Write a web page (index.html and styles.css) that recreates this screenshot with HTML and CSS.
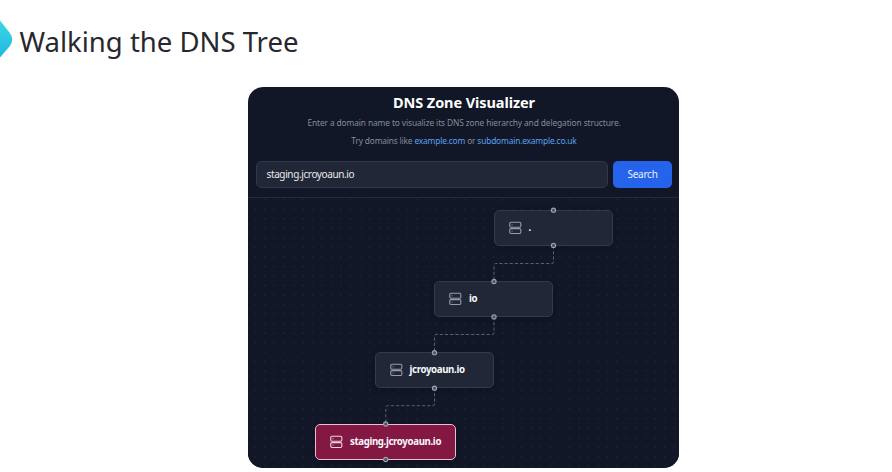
FILE: index.html
```
<!DOCTYPE html>
<html lang="en">
<head>
<meta charset="utf-8">
<title>Walking the DNS Tree</title>
<link rel="stylesheet" href="styles.css">
</head>
<body>
<svg width="0" height="0" class="defs" aria-hidden="true">
  <symbol id="server" viewBox="0 0 24 24"><rect x="3" y="2.2" width="19" height="8.4" rx="2"/><rect x="3" y="13" width="19" height="8.4" rx="2"/><path d="M7 6.4h.01M7 17.2h.01"/></symbol>
</svg>
<header class="slide-header">
  <svg class="mark" width="13" height="42" viewBox="0 0 13 42"><defs><linearGradient id="g" x1="0" y1="0" x2="0" y2="1"><stop offset="0" stop-color="#3dd6e3"/><stop offset="1" stop-color="#20b6e2"/></linearGradient></defs><path d="M0 2.5L9.5 14.5Q15 21.5 9.5 28.5L0 39.5Z" fill="url(#g)"/></svg>
  <h1>Walking the DNS Tree</h1>
</header>
<main class="card">
  <section class="top">
    <h2>DNS Zone Visualizer</h2>
    <p class="intro">Enter a domain name to visualize its DNS zone hierarchy and delegation structure.</p>
    <p class="try">Try domains like <a>example.com</a> or <a>subdomain.example.co.uk</a></p>
    <div class="search">
      <div class="field"><span>staging.jcroyoaun.io</span></div>
      <div class="button"><span>Search</span></div>
    </div>
  </section>
  <section class="canvas">
    <svg class="edges" width="431" height="271" viewBox="0 0 431 271">
      <path d="M305.5 48V64Q305.5 65.5 303.8 65.5H247.7Q246 65.5 246 67.4V84"/>
      <path d="M246 119V135Q246 136.5 244.3 136.5H188.2Q186.5 136.5 186.5 138.4V155"/>
      <path d="M186.5 190V206Q186.5 207.7 184.8 207.7H139.5Q137.8 207.7 137.8 209.4V226"/>
    </svg>
    <div class="node root"><svg><use href="#server"/></svg><b>.</b></div>
    <div class="node tld"><svg><use href="#server"/></svg><b>io</b></div>
    <div class="node domain"><svg><use href="#server"/></svg><b>jcroyoaun.io</b></div>
    <div class="node active"><svg><use href="#server"/></svg><b>staging.jcroyoaun.io</b></div>
    <svg class="handles" width="431" height="271" viewBox="0 0 431 271">
      <circle cx="305.5" cy="12.2" r="2.1"/><circle cx="305.5" cy="47.4" r="2.1"/>
      <circle cx="246" cy="83.5" r="2.1"/><circle cx="246" cy="118.9" r="2.1"/>
      <circle cx="186.5" cy="154.7" r="2.1"/><circle cx="186.5" cy="190.2" r="2.1"/>
      <circle cx="137.7" cy="226" r="2.1"/><circle cx="137.7" cy="261.5" r="2.1"/>
    </svg>
  </section>
</main>
</body>
</html>
```

FILE: styles.css
```
* { box-sizing: border-box; }
body { margin: 0; width: 892px; height: 472px; overflow: hidden; background: #fff; font-family: "Noto Sans", "Open Sans", sans-serif; }
.defs { position: absolute; }
.slide-header { display: flex; align-items: center; height: 87px; padding-bottom: 3px; }
.mark { flex: none; margin-top: -6px; }
h1 { margin: 0 0 0 6.5px; font-size: 27.5px; font-weight: 400; line-height: 40px; letter-spacing: 0; color: #27272d; white-space: nowrap; }
.card { width: 431px; height: 381px; margin-left: 248px; border-radius: 15px; overflow: hidden; background: #111726; }
.top { height: 111px; padding: 5px 7px 0 8px; border-bottom: 1px solid #232a38; text-align: center; }
h2 { margin: 0; font-size: 14.5px; line-height: 20px; font-weight: 700; color: #fff; letter-spacing: -0.08px; white-space: nowrap; }
p { margin: 0; font-size: 8.4px; line-height: 17px; color: #858c99; white-space: nowrap; letter-spacing: -0.12px; }
.intro { margin-top: 2px; }
.try { margin-top: 1px; letter-spacing: -0.18px; }
p a { color: #5ba0f2; }
.search { display: flex; gap: 5px; margin-top: 12px; }
.field { flex: 1; height: 27px; padding-left: 9.5px; border: 1px solid #303746; border-radius: 5px; background: #212736; color: #e8eaee; font-size: 10px; letter-spacing: -0.38px; line-height: 25px; text-align: left; }
.button { width: 59px; height: 27px; border-radius: 5px; background: #2563eb; color: #e9effd; font-size: 10px; letter-spacing: -0.25px; line-height: 27px; }
.canvas { position: relative; height: 270px; background: radial-gradient(circle, #202735 0.5px, transparent 0.9px) 2.7px -2.9px / 9.52px 9.52px #111726; }
.edges, .handles { position: absolute; left: 0; top: 0; }
.edges { fill: none; stroke: #5a616e; stroke-width: 1; stroke-dasharray: 3.2 2; }
.handles { fill: #4b5361; stroke: #9aa1ae; stroke-width: 1.1; }
.node { position: absolute; display: flex; align-items: center; width: 119px; height: 36px; padding-left: 13px; border: 1px solid #343b48; border-radius: 5px; background: #212736; color: #f7f8fa; box-shadow: 0 2px 4px #0b101c66; }
.node svg { width: 14px; height: 14px; flex: none; fill: none; stroke: #969ca7; stroke-width: 1.9; stroke-linecap: round; stroke-linejoin: round; }
.node b { margin-left: 6.5px; font-size: 9.7px; line-height: 14px; font-weight: 700; letter-spacing: -0.37px; white-space: nowrap; }
.root { left: 246px; top: 12px; }
.tld { left: 186.4px; top: 83.3px; }
.domain { left: 127px; top: 154.3px; }
.active { left: 67.4px; top: 225.8px; width: 141px; background: #831843; border-color: #e7bfd0; }
.active svg { stroke: #ecd3dd; }
```
